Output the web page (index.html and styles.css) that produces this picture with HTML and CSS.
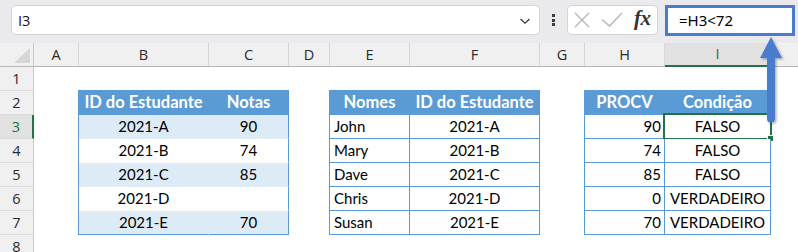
FILE: index.html
```html
<!DOCTYPE html>
<html>
<head>
<meta charset="utf-8">
<link rel="stylesheet" href="styles.css">
</head>
<body>
<div class="app">
  <div class="topbar">
    <div class="namebox">
      <span class="namebox-text">I3</span>
      <svg class="chev" width="12" height="8" viewBox="0 0 12 8"><polyline points="1.5,2 6,6.2 10.5,2" fill="none" stroke="#3a3a3a" stroke-width="1.3"/></svg>
    </div>
    <div class="dots"><span></span><span></span><span></span></div>
    <div class="fxbox">
      <svg width="16" height="16" viewBox="0 0 16 16"><path d="M1 1 L15 15 M15 1 L1 15" stroke="#b4b4b4" stroke-width="1.3" fill="none"/></svg>
      <svg class="check" width="22" height="16" viewBox="0 0 22 16"><polyline points="1,7.5 8.5,14 21,1" fill="none" stroke="#b4b4b4" stroke-width="1.3"/></svg>
      <span class="fx">fx</span>
    </div>
    <div class="formula">=H3&lt;72</div>
  </div>

  <div class="colhdr">
    <div class="corner"><svg width="16" height="15" viewBox="0 0 16 15"><polygon points="16,0 16,15 0,15" fill="#d6d6d6"/></svg></div>
    <div class="ch">A</div>
    <div class="ch">B</div>
    <div class="ch">C</div>
    <div class="ch">D</div>
    <div class="ch">E</div>
    <div class="ch">F</div>
    <div class="ch">G</div>
    <div class="ch">H</div>
    <div class="ch ch-active">I</div>
    <div class="ch ch-last"></div>
  </div>

  <div class="grid">
    <div class="rh r1">1</div>
    <div class="rh r2">2</div>
    <div class="rh rh-active r3">3</div>
    <div class="rh r4">4</div>
    <div class="rh r5">5</div>
    <div class="rh r6">6</div>
    <div class="rh r7">7</div>
    <div class="rh r8">8</div>

    <div class="tbl tbl1">
      <div class="c hd">ID do Estudante</div><div class="c hd">Notas</div>
      <div class="c band">2021-A</div><div class="c band">90</div>
      <div class="c">2021-B</div><div class="c">74</div>
      <div class="c band">2021-C</div><div class="c band">85</div>
      <div class="c">2021-D</div><div class="c"></div>
      <div class="c band">2021-E</div><div class="c band">70</div>
    </div>

    <div class="tbl tbl2 lined">
      <div class="c hd">Nomes</div><div class="c hd">ID do Estudante</div>
      <div class="c left">John</div><div class="c">2021-A</div>
      <div class="c left">Mary</div><div class="c">2021-B</div>
      <div class="c left">Dave</div><div class="c">2021-C</div>
      <div class="c left">Chris</div><div class="c">2021-D</div>
      <div class="c left">Susan</div><div class="c">2021-E</div>
    </div>

    <div class="tbl tbl3 lined">
      <div class="c hd">PROCV</div><div class="c hd">Condição</div>
      <div class="c right">90</div><div class="c sel">FALSO<span class="selbox"><span class="handle"></span></span></div>
      <div class="c right">74</div><div class="c">FALSO</div>
      <div class="c right">85</div><div class="c">FALSO</div>
      <div class="c right">0</div><div class="c">VERDADEIRO</div>
      <div class="c right">70</div><div class="c">VERDADEIRO</div>
    </div>
  </div>

  <svg class="arrow" width="798" height="252" viewBox="0 0 798 252">
    <defs>
      <filter id="sh" x="-50%" y="-20%" width="200%" height="140%">
        <feDropShadow dx="1.5" dy="1.5" stdDeviation="1.2" flood-color="#000" flood-opacity="0.3"/>
      </filter>
    </defs>
    <path d="M771 37 L782 58 L775 58 L775 119 Q775 122.5 771 122.5 Q767 122.5 767 119 L767 58 L760 58 Z" fill="#4a7bcf" filter="url(#sh)"/>
  </svg>
</div>
</body>
</html>
```

FILE: styles.css
```css
* { box-sizing: border-box; }
html, body { margin: 0; padding: 0; background: #ffffff; }
.app {
  position: relative;
  width: 798px;
  height: 252px;
  overflow: hidden;
  font-family: "Noto Sans", "Open Sans", sans-serif;
}

/* ---------- top bar ---------- */
.topbar {
  height: 43px;
  background: #eaeaed;
  display: flex;
  align-items: flex-start;
  padding: 5px 0 0 11px;
}
.namebox {
  width: 529px;
  height: 30px;
  background: #fff;
  border: 1px solid #d4d4d8;
  border-radius: 5px;
  display: flex;
  align-items: center;
  justify-content: space-between;
  padding: 0 8px 0 6px;
}
.namebox-text { font-family: "Open Sans", sans-serif; font-size: 14.5px; color: #111; }
.chev { display: block; margin-top: 1px; }
.dots {
  width: 27px;
  height: 30px;
  display: flex;
  flex-direction: column;
  align-items: center;
  justify-content: center;
  gap: 1.5px;
}
.dots span {
  display: block;
  width: 3px;
  height: 3px;
  background: #3c3c3c;
}
.fxbox {
  width: 91px;
  height: 30px;
  background: #fff;
  border: 1px solid #d4d4d8;
  border-radius: 5px;
  display: flex;
  align-items: center;
  padding: 0 0 0 6px;
}
.fxbox svg { display: block; }
.fxbox .check { margin-left: 11px; }
.fx {
  font-family: "Liberation Serif", "DejaVu Serif", serif;
  font-style: italic;
  font-weight: 700;
  font-size: 21px;
  color: #333;
  margin-left: 11px;
  margin-top: -3px;
  letter-spacing: -0.5px;
}
.formula {
  margin-left: 7px;
  width: 130px;
  height: 31px;
  background: #fff;
  border: 3px solid #4a7bcf;
  font-size: 15px;
  color: #000;
  padding: 2px 0 0 11px;
  line-height: 21px;
}

/* ---------- column headers ---------- */
.colhdr, .grid {
  display: grid;
  grid-template-columns: 34px 45px 130px 80px 41px 80px 130px 45px 80px 106px 1fr;
}
.colhdr {
  height: 24px;
  background: #f0f0f0;
  border-bottom: 1px solid #b7b7b7;
}
.corner {
  border-right: 1px solid #c8c8c8;
  display: flex;
  align-items: flex-end;
  justify-content: flex-end;
  padding: 0 3px 3px 0;
}
.corner svg { display: block; }
.ch {
  border-right: 1px solid #d6d6d6;
  text-align: center;
  font-family: "Open Sans", sans-serif;
  font-size: 14.5px;
  line-height: 23px;
  color: #2b2b2b;
}
.ch-last { border-right: none; }
.ch-active {
  background: #e1e1e1;
  color: #217346;
  border-bottom: 2px solid #217346;
  line-height: 22px;
  height: 24px;
  margin-bottom: -1px;
}

/* ---------- body grid ---------- */
.grid {
  grid-template-rows: repeat(8, 24px);
}
.rh {
  grid-column: 1;
  background: #f0f0f0;
  border-right: 1px solid #c8c8c8;
  border-bottom: 1px solid #dadada;
  text-align: center;
  font-family: "Open Sans", sans-serif;
  font-size: 14.5px;
  line-height: 23px;
  color: #2b2b2b;
}
.r1 { grid-row: 1; }
.r2 { grid-row: 2; }
.r3 { grid-row: 3; }
.r4 { grid-row: 4; }
.r5 { grid-row: 5; }
.r6 { grid-row: 6; }
.r7 { grid-row: 7; }
.r8 { grid-row: 8; }
.rh-active {
  background: #e1e1e1;
  color: #217346;
  border-right: 2px solid #217346;
}

/* ---------- tables ---------- */
.tbl {
  grid-row: 2 / 8;
  margin-left: -1px;
  margin-top: -1px;
  display: grid;
  grid-template-rows: repeat(6, 24px);
  border-top: 1px solid #5b9bd5;
  border-left: 1px solid #5b9bd5;
  font-family: Lato, "Liberation Sans", sans-serif;
  font-size: 15px;
  color: #000;
}
.tbl1 { grid-column: 3 / 5; grid-template-columns: 130px 80px; }
.tbl2 { grid-column: 6 / 8; grid-template-columns: 80px 130px; }
.tbl3 { grid-column: 9 / 11; grid-template-columns: 80px 106px; }

.c {
  position: relative;
  height: 24px;
  text-align: center;
  line-height: 23px;
  white-space: nowrap;
  border-right: 1px solid transparent;
  border-bottom: 1px solid transparent;
  background: #fff;
}
.tbl1 .c:nth-child(2n) { border-right-color: #5b9bd5; }
.tbl1 .c:nth-last-child(-n+2) { border-bottom-color: #5b9bd5; }
.lined .c { border-right-color: #5b9bd5; border-bottom-color: #5b9bd5; }

.c.hd {
  background: #5b9bd5;
  color: #fff;
  font-weight: 700;
  font-size: 16.5px;
}
.c.band { background: #ddebf7; }
.c.left { text-align: left; padding-left: 4px; }
.c.right { text-align: right; padding-right: 3px; }

.selbox {
  position: absolute;
  left: -2px;
  top: -2px;
  right: -2px;
  bottom: -2px;
  border: 2px solid #217346;
}
.handle {
  position: absolute;
  right: -4px;
  bottom: -4px;
  width: 7px;
  height: 7px;
  background: #217346;
  border: 1px solid #fff;
}

/* ---------- arrow overlay ---------- */
.arrow {
  position: absolute;
  left: 0;
  top: 0;
  pointer-events: none;
}
```
